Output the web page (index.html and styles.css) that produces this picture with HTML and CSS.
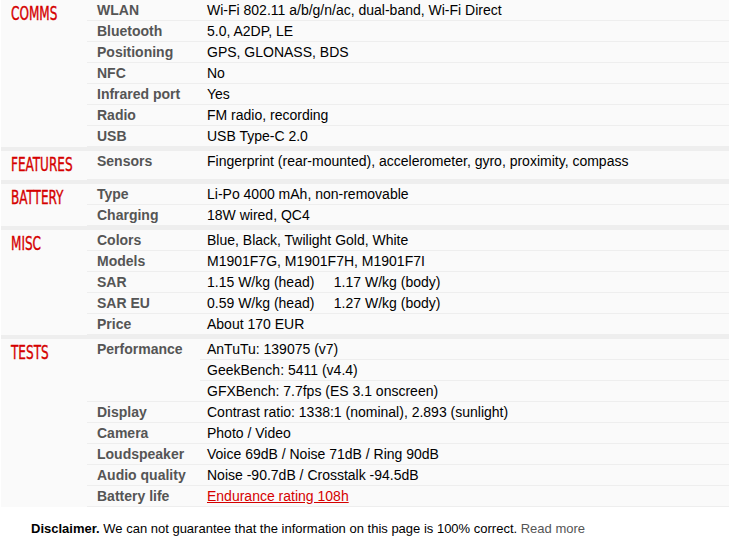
FILE: index.html
```html
<!DOCTYPE html>
<html>
<head>
<meta charset="utf-8">
<link rel="stylesheet" href="styles.css">
</head>
<body>
<div class="specs">
  <table class="sec">
    <colgroup><col class="c1"><col class="c2"><col></colgroup>
    <tr><th class="cat" rowspan="7"><span class="cat-t">COMMS</span></th><td class="lbl">WLAN</td><td class="val">Wi-Fi 802.11 a/b/g/n/ac, dual-band, Wi-Fi Direct</td></tr>
    <tr><td class="lbl">Bluetooth</td><td class="val">5.0, A2DP, LE</td></tr>
    <tr><td class="lbl">Positioning</td><td class="val">GPS, GLONASS, BDS</td></tr>
    <tr><td class="lbl">NFC</td><td class="val">No</td></tr>
    <tr><td class="lbl">Infrared port</td><td class="val">Yes</td></tr>
    <tr><td class="lbl">Radio</td><td class="val">FM radio, recording</td></tr>
    <tr><td class="lbl">USB</td><td class="val">USB Type-C 2.0</td></tr>
  </table>
  <table class="sec">
    <colgroup><col class="c1"><col class="c2"><col></colgroup>
    <tr><th class="cat"><span class="cat-t">FEATURES</span></th><td class="lbl">Sensors</td><td class="val">Fingerprint (rear-mounted), accelerometer, gyro, proximity, compass</td></tr>
  </table>
  <table class="sec">
    <colgroup><col class="c1"><col class="c2"><col></colgroup>
    <tr><th class="cat" rowspan="2"><span class="cat-t">BATTERY</span></th><td class="lbl">Type</td><td class="val">Li-Po 4000 mAh, non-removable</td></tr>
    <tr><td class="lbl">Charging</td><td class="val">18W wired, QC4</td></tr>
  </table>
  <table class="sec">
    <colgroup><col class="c1"><col class="c2"><col></colgroup>
    <tr><th class="cat" rowspan="5"><span class="cat-t">MISC</span></th><td class="lbl">Colors</td><td class="val">Blue, Black, Twilight Gold, White</td></tr>
    <tr><td class="lbl">Models</td><td class="val">M1901F7G, M1901F7H, M1901F7I</td></tr>
    <tr><td class="lbl">SAR</td><td class="val">1.15 W/kg (head)&nbsp;&nbsp;&nbsp;&nbsp;&nbsp;1.17 W/kg (body)</td></tr>
    <tr><td class="lbl">SAR EU</td><td class="val">0.59 W/kg (head)&nbsp;&nbsp;&nbsp;&nbsp;&nbsp;1.27 W/kg (body)</td></tr>
    <tr><td class="lbl">Price</td><td class="val">About 170 EUR</td></tr>
  </table>
  <table class="sec last">
    <colgroup><col class="c1"><col class="c2"><col></colgroup>
    <tr><th class="cat" rowspan="10"><span class="cat-t">TESTS</span></th><td class="lbl" rowspan="3">Performance</td><td class="val">AnTuTu: 139075 (v7)</td></tr>
    <tr><td class="val">GeekBench: 5411 (v4.4)</td></tr>
    <tr><td class="val">GFXBench: 7.7fps (ES 3.1 onscreen)</td></tr>
    <tr><td class="lbl">Display</td><td class="val">Contrast ratio: 1338:1 (nominal), 2.893 (sunlight)</td></tr>
    <tr><td class="lbl">Camera</td><td class="val">Photo / Video</td></tr>
    <tr><td class="lbl">Loudspeaker</td><td class="val">Voice 69dB / Noise 71dB / Ring 90dB</td></tr>
    <tr><td class="lbl">Audio quality</td><td class="val">Noise -90.7dB / Crosstalk -94.5dB</td></tr>
    <tr><td class="lbl">Battery life</td><td class="val"><a class="red" href="#">Endurance rating 108h</a></td></tr>
  </table>
</div>
<p class="disclaimer"><b>Disclaimer.</b> We can not guarantee that the information on this page is 100% correct. <a class="more" href="#">Read more</a></p>
</body>
</html>
```

FILE: styles.css
```css
html, body {
  margin: 0;
  padding: 0;
  background: #fff;
}
body {
  font-family: "Liberation Sans", Arial, sans-serif;
  font-size: 14px;
  color: #000;
}
.specs {
  margin-left: 1px;
  background: #eee;
  display: flex;
  flex-direction: column;
  gap: 4px;
}
.sec {
  width: 100%;
  table-layout: fixed;
  border-collapse: collapse;
  border-spacing: 0;
  background: #fafafa;
}
.c1 { width: 86px; }
.c2 { width: 113px; }
.sec td, .sec th {
  padding: 0;
  vertical-align: top;
  text-align: left;
}
.cat {
  padding: 0 0 2px 10px !important;
  font-weight: normal;
  line-height: 26px;
  white-space: nowrap;
  overflow: visible;
}
.cat-t {
  display: block;
  height: 26px;
  font-family: "Liberation Sans Narrow", "DejaVu Sans Condensed", sans-serif;
  font-size: 20px;
  line-height: 26px;
  color: #d50000;
  -webkit-text-stroke: 0.4px #d50000;
  transform: scaleX(0.67);
  transform-origin: left center;
}
.lbl {
  padding-left: 10px !important;
  font-weight: bold;
  color: #555;
  line-height: 20px;
  border-bottom: 1px solid #eee;
  white-space: nowrap;
}
.val {
  padding-left: 7px !important;
  line-height: 20px;
  border-bottom: 1px solid #eee;
  white-space: nowrap;
}
.red {
  color: #d50000;
  text-decoration: underline;
}
.disclaimer {
  margin: 12px 0 0 31px;
  font-size: 13px;
  line-height: 20px;
  color: #000;
}
.more {
  color: #555;
  text-decoration: none;
}
```
